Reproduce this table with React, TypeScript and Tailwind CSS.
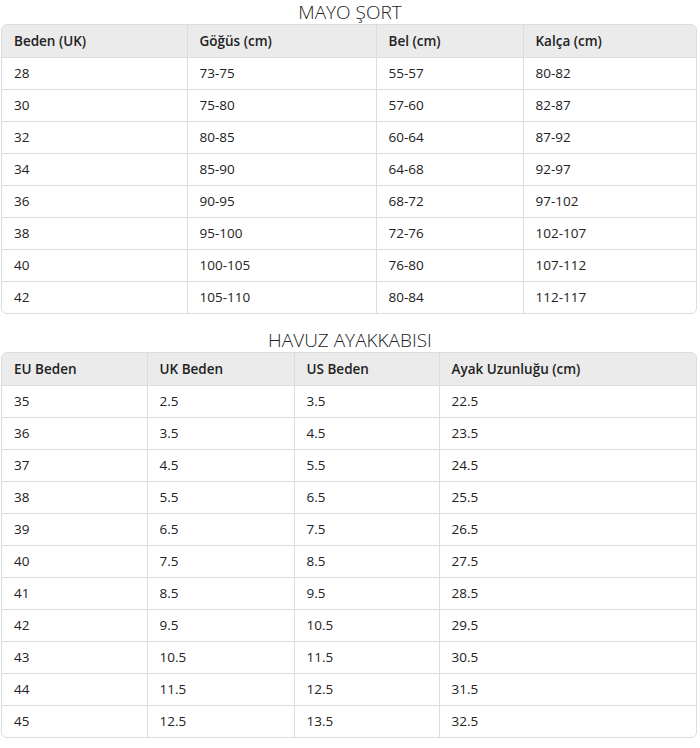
import React from "react";

const font = { fontFamily: '"Open Sans", "Noto Sans", sans-serif' };

type T = { title: string; cols: number[]; head: string[]; rows: string[][] };

const tables: T[] = [
  {
    title: "MAYO ŞORT",
    cols: [185, 189, 147, 175],
    head: ["Beden (UK)", "Göğüs (cm)", "Bel (cm)", "Kalça (cm)"],
    rows: [
      ["28", "73-75", "55-57", "80-82"],
      ["30", "75-80", "57-60", "82-87"],
      ["32", "80-85", "60-64", "87-92"],
      ["34", "85-90", "64-68", "92-97"],
      ["36", "90-95", "68-72", "97-102"],
      ["38", "95-100", "72-76", "102-107"],
      ["40", "100-105", "76-80", "107-112"],
      ["42", "105-110", "80-84", "112-117"],
    ],
  },
  {
    title: "HAVUZ AYAKKABISI",
    cols: [145, 147, 145, 259],
    head: ["EU Beden", "UK Beden", "US Beden", "Ayak Uzunluğu (cm)"],
    rows: [
      ["35", "2.5", "3.5", "22.5"],
      ["36", "3.5", "4.5", "23.5"],
      ["37", "4.5", "5.5", "24.5"],
      ["38", "5.5", "6.5", "25.5"],
      ["39", "6.5", "7.5", "26.5"],
      ["40", "7.5", "8.5", "27.5"],
      ["41", "8.5", "9.5", "28.5"],
      ["42", "9.5", "10.5", "29.5"],
      ["43", "10.5", "11.5", "30.5"],
      ["44", "11.5", "12.5", "31.5"],
      ["45", "12.5", "13.5", "32.5"],
    ],
  },
];

function SizeTable({ t, first }: { t: T; first: boolean }) {
  return (
    <div className={first ? "" : "mt-[14px]"}>
      <div className="h-[24px] flex items-center justify-center text-[19px] font-light text-[#222] leading-none">
        {t.title}
      </div>
      <div className="mx-[1px] w-[696px] border border-[#dcdcdc] rounded-[6px] overflow-hidden">
        <table className="w-full table-fixed border-collapse text-[13.5px] text-[#222]">
          <colgroup>
            {t.cols.map((w, i) => (
              <col key={i} style={{ width: w }} />
            ))}
          </colgroup>
          <thead>
            <tr className="bg-[#ebebeb] h-[32px]">
              {t.head.map((h, i) => (
                <th
                  key={i}
                  className={`text-left font-semibold pl-[12px] ${i > 0 ? "border-l border-[#dcdcdc]" : ""}`}
                >
                  {h}
                </th>
              ))}
            </tr>
          </thead>
          <tbody>
            {t.rows.map((r, ri) => (
              <tr key={ri} className="h-[32px] border-t border-[#dcdcdc]">
                {r.map((c, ci) => (
                  <td
                    key={ci}
                    className={`pl-[12px] ${ci > 0 ? "border-l border-[#dcdcdc]" : ""}`}
                  >
                    {c}
                  </td>
                ))}
              </tr>
            ))}
          </tbody>
        </table>
      </div>
    </div>
  );
}

export default function App() {
  return (
    <div className="w-[700px] h-[748px] bg-white" style={font}>
      {tables.map((t, i) => (
        <SizeTable key={i} t={t} first={i === 0} />
      ))}
    </div>
  );
}
